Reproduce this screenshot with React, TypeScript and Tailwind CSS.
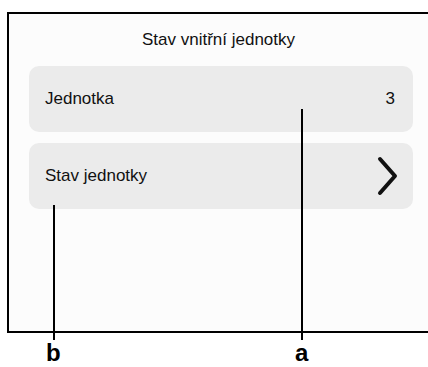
import React from 'react';

const font = { fontFamily: '"Liberation Sans", Arial, sans-serif' };

function Chevron() {
  return (
    <svg width="22" height="40" viewBox="0 0 22 40" fill="none">
      <polyline
        points="3,3 18,20 3,37"
        stroke="#111"
        strokeWidth="4"
        strokeLinecap="round"
        strokeLinejoin="round"
      />
    </svg>
  );
}

export default function App() {
  return (
    <div className="relative w-[428px] h-[367px] bg-white overflow-hidden" style={font}>
      {/* Device screen, runs off the right edge */}
      <div className="ml-[7px] mt-[12px] w-[440px] h-[321px] border-l-2 border-t-2 border-b-2 border-black bg-[#fcfcfc]">
        <div className="h-[52px] w-[419px] flex items-center justify-center text-[17px] text-[#111]">
          Stav vnitřní jednotky
        </div>
        <div className="ml-[20px] w-[384px] flex flex-col gap-[11px]">
          <div className="h-[66px] rounded-[10px] bg-[#ebebeb] flex items-center justify-between pl-[16px] pr-[18px] text-[17px] text-[#111]">
            <span>Jednotka</span>
            <span>3</span>
          </div>
          <div className="h-[66px] rounded-[10px] bg-[#ebebeb] flex items-center justify-between pl-[16px] pr-[14px] text-[17px] text-[#111]">
            <span>Stav jednotky</span>
            <Chevron />
          </div>
        </div>
      </div>

      {/* Callouts */}
      <div className="absolute left-[301px] top-[109px] w-[2px] h-[231px] bg-black" />
      <div className="absolute left-[53px] top-[205px] w-[2px] h-[135px] bg-black" />
      <div className="absolute left-[46px] top-[339px] text-[24px] font-bold leading-[28px] text-black">b</div>
      <div className="absolute left-[295px] top-[339px] text-[24px] font-bold leading-[28px] text-black">a</div>
    </div>
  );
}
